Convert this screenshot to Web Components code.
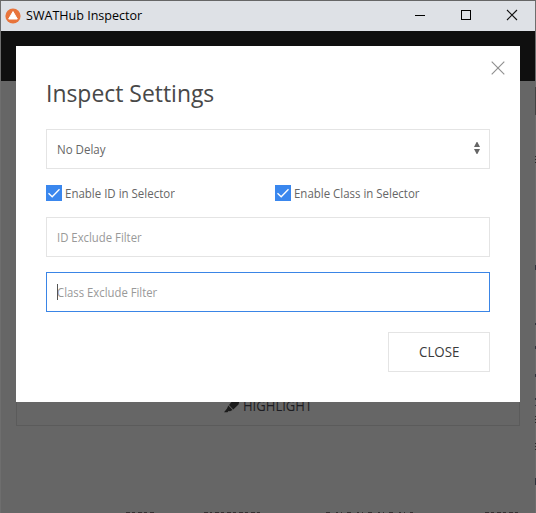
<!DOCTYPE html>
<html lang="en"><head><meta charset="utf-8"><title>SWATHub Inspector</title>
<style>html,body{margin:0;height:513px;overflow:hidden;background:#666}body{font-family:"Open Sans","Noto Sans",sans-serif}</style></head>
<body><inspector-window></inspector-window>
<script>
/* Text run whose glyphs are condensed or widened to a given width */
customElements.define('fit-text', class extends HTMLElement{
  connectedCallback(){
    const r=this.attachShadow({mode:'open'});
    r.innerHTML=`<style>:host{display:block;white-space:nowrap;width:${this.getAttribute('w')}px}span{display:inline-block;transform-origin:0 50%}</style><span><slot></slot></span>`;
    const s=r.querySelector('span');
    s.style.transform=`scaleX(${this.getAttribute('w')/s.offsetWidth})`;
  }
});
customElements.define('title-bar', class extends HTMLElement{
  connectedCallback(){
    this.attachShadow({mode:'open'}).innerHTML=`<style>
    :host{display:flex;height:30px;background:#dee1e6;color:#000;align-items:center;padding-left:4px;box-sizing:border-box;font-size:12px;line-height:16px}
    .logo{margin-right:5px;flex:none}.controls{margin-left:auto;flex:none}</style>
    <svg class="logo" width="16" height="16" style="margin-top:-1px"><circle cx="8" cy="8" r="7.6" fill="#e8743b"/><path d="M8 3.6L12.3 11H3.7Z" fill="#fff" stroke="#fff" stroke-width="1" stroke-linejoin="round"/></svg>
    <fit-text w="116"><slot></slot></fit-text>
    <svg class="controls" width="140" height="30"><path d="M20 14.5H30" stroke="#000"/><rect x="66.500" y="9.500" width="9" height="9" fill="none" stroke="#000"/><path d="M112 9L122 19M122 9L112 19" stroke="#111" stroke-width="1.1"/></svg>`;
  }
});
customElements.define('check-option', class extends HTMLElement{
  connectedCallback(){
    this.attachShadow({mode:'open'}).innerHTML=`<style>:host{display:flex;height:16px;gap:3px;font-size:12px;line-height:17px;color:#666}svg{flex:none}</style>
    <svg width="16" height="16"><path fill="#3a87ee" d="M0 0H16V16H0Z"/><path d="M2.500 8.200L6.200 11.700L13.500 4.300" fill="none" stroke="#fff" stroke-width="1.35"/></svg>
    <fit-text w="${this.getAttribute('w')}"><slot></slot></fit-text>`;
  }
});
customElements.define('form-field', class extends HTMLElement{
  connectedCallback(){
    const kind=this.getAttribute('kind'),focus=kind==='focus';
    this.attachShadow({mode:'open'}).innerHTML=`<style>
    :host{display:flex;box-sizing:border-box;height:40px;border:1px solid ${focus?'#3a85e6':'#e4e4e4'};padding:0 9px 0 10px;align-items:center;font-size:12px;line-height:17px;color:${kind==='select'?'#666':'#999'};position:relative}
    svg{margin-left:auto}i{position:absolute;left:10px;top:11px;width:1px;height:16px;background:#555}</style>
    <fit-text w="${this.getAttribute('w')}"><slot></slot></fit-text>
    ${focus?'<i></i>':''}${kind==='select'?'<svg width="6" height="12" style="margin-top:-3px"><path fill="#666" d="M2.600 0H3.400L6 5H0ZM0 7H6L3.400 12H2.600Z"/></svg>':''}`;
  }
});
customElements.define('settings-dialog', class extends HTMLElement{
  connectedCallback(){
    this.attachShadow({mode:'open'}).innerHTML=`<style>
    :host{display:block;box-sizing:border-box;width:504px;height:356px;background:#fff;padding:29px 30px 30px}
    :host{position:relative}
    .x{position:absolute;right:15px;top:15px}
    .title{font-size:24px;line-height:36px;color:#484848;margin-bottom:18px}
    .checks{display:grid;grid-template-columns:229px 1fr;margin:16px 0}
    .last{margin-top:15px}
    .foot{display:flex;justify-content:flex-end;margin-top:20px}
    button{all:unset;box-sizing:border-box;width:102px;height:40px;border:1px solid #e4e4e4;display:flex;align-items:center;justify-content:center;font-size:14px;line-height:20px;color:#3a3a3a}</style>
    <svg class="x" width="14" height="14"><path d="M.7.7L13.300 13.300M13.300 .7L.7 13.300" stroke="#909090" stroke-width="1.15"/></svg>
    <fit-text class="title" w="168">Inspect Settings</fit-text>
    <form-field kind="select" w="49">No Delay</form-field>
    <div class="checks"><check-option w="110">Enable ID in Selector</check-option><check-option w="125">Enable Class in Selector</check-option></div>
    <form-field w="85">ID Exclude Filter</form-field>
    <form-field class="last" kind="focus" w="100">Class Exclude Filter</form-field>
    <div class="foot"><button><fit-text w="40">CLOSE</fit-text></button></div>`;
  }
});
customElements.define('inspector-window', class extends HTMLElement{
  connectedCallback(){
    this.attachShadow({mode:'open'}).innerHTML=`<style>
    :host{display:block;position:relative;box-sizing:border-box;width:536px;height:513px;padding:1px;background:#666;overflow:hidden}
    .nav{height:50px;background:#0f0f0f}
    settings-dialog{position:absolute;left:16px;top:46px}
    .action{box-sizing:border-box;width:504px;height:40px;margin:305px 15px 0;border:1px solid #5b5b5b;display:flex;justify-content:center;align-items:center;gap:3px;font-size:14px;line-height:20px;color:#1d1d22}
    .action svg{margin-left:-1px}
    .edge{position:absolute;left:0;top:0;pointer-events:none}</style>
    <title-bar>SWATHub Inspector</title-bar><div class="nav"></div>
    <div class="action"><svg width="16" height="14"><path fill="#1b1b1b" d="M10 0L15.800 .5L14.500 5.500L9.300 10.500L5 6Z M4.300 6.500L8.500 11L6 12.200L4.500 12L3.500 13.300H0L3 9.500Z"/></svg><fit-text w="69">HIGHLIGHT</fit-text></div>
    <settings-dialog></settings-dialog>
    <svg class="edge" width="536" height="513">
      <path stroke="#6e6e6e" d="M.5 1V513M535.500 1V513"/>
      <path stroke="#444" d="M535.500 87V115"/><path stroke="#292929" stroke-dasharray="1 2" d="M535.500 156V163M535.500 416V423M535.500 443V450"/>
      <path stroke="#30343d" d="M535.500 265V270M535.500 323V325M535.500 346V349M535.500 374V377M535.500 398V400M535.500 405V406M535.500 478V485"/>
      <g stroke="#352f31" stroke-dasharray="4 2 3 3"><path d="M126 512.500H156M204 512.500H212M215 512.500H263M485 512.500H518"/><path stroke-dasharray="4 6 2 3 1 5" d="M326 512.500H413"/></g>
    </svg>`;
  }
});
</script></body></html>
